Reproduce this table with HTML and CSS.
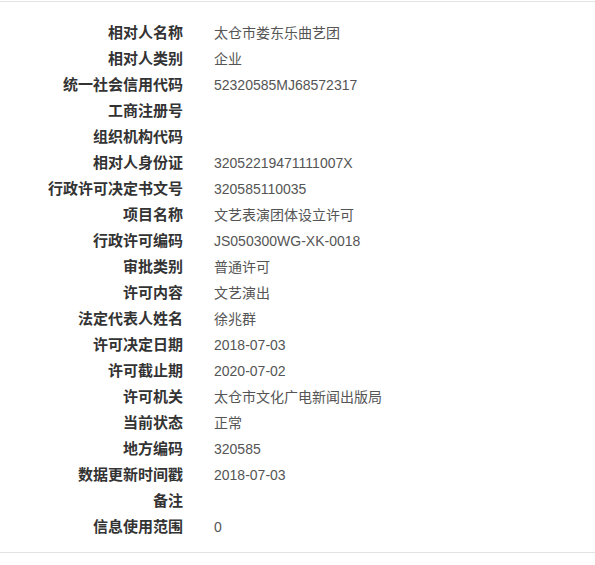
FILE: index.html
```html
<!DOCTYPE html>
<html lang="zh-CN">
<head>
    <meta charset="UTF-8">
    <title>行政许可详情</title>
    <link rel="stylesheet" href="styles.css">
</head>
<body>
    <div class="detail">
        <table class="info">
            <tr><th>相对人名称</th><td>太仓市娄东乐曲艺团</td></tr>
            <tr><th>相对人类别</th><td>企业</td></tr>
            <tr><th>统一社会信用代码</th><td>52320585MJ68572317</td></tr>
            <tr><th>工商注册号</th><td></td></tr>
            <tr><th>组织机构代码</th><td></td></tr>
            <tr><th>相对人身份证</th><td>32052219471111007X</td></tr>
            <tr><th>行政许可决定书文号</th><td>320585110035</td></tr>
            <tr><th>项目名称</th><td>文艺表演团体设立许可</td></tr>
            <tr><th>行政许可编码</th><td>JS050300WG-XK-0018</td></tr>
            <tr><th>审批类别</th><td>普通许可</td></tr>
            <tr><th>许可内容</th><td>文艺演出</td></tr>
            <tr><th>法定代表人姓名</th><td>徐兆群</td></tr>
            <tr><th>许可决定日期</th><td>2018-07-03</td></tr>
            <tr><th>许可截止期</th><td>2020-07-02</td></tr>
            <tr><th>许可机关</th><td>太仓市文化广电新闻出版局</td></tr>
            <tr><th>当前状态</th><td>正常</td></tr>
            <tr><th>地方编码</th><td>320585</td></tr>
            <tr><th>数据更新时间戳</th><td>2018-07-03</td></tr>
            <tr><th>备注</th><td></td></tr>
            <tr><th>信息使用范围</th><td>0</td></tr>
        </table>
    </div>
</body>
</html>
```

FILE: styles.css
```css
body {
    margin: 0;
    background-color: #fff;
    font-family: Arial, "Liberation Sans", "Noto Sans CJK SC", sans-serif;
}
.detail {
    margin-top: 1px;
    border-top: 1px solid #e3e3e3;
    border-bottom: 1px solid #e3e3e3;
    padding: 18px 0 12px;
}
.info {
    border-collapse: collapse;
}
.info th,
.info td {
    height: 26px;
    padding: 0;
    line-height: 26px;
    vertical-align: middle;
    white-space: nowrap;
}
.info th {
    width: 183px;
    text-align: right;
    font-size: 15px;
    font-weight: bold;
    color: #333;
}
.info td {
    padding-left: 31px;
    font-size: 14px;
    color: #555;
}
```
